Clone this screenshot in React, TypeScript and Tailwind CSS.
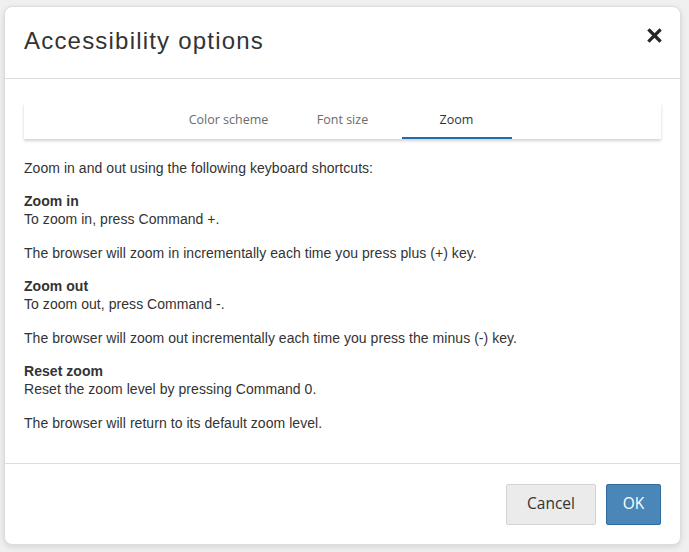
import { useState } from "react";

const tabs = ["Color scheme", "Font size", "Zoom"];

const sections = [
  {
    title: "Zoom in",
    line: "To zoom in, press Command +.",
    note: "The browser will zoom in incrementally each time you press plus (+) key.",
  },
  {
    title: "Zoom out",
    line: "To zoom out, press Command -.",
    note: "The browser will zoom out incrementally each time you press the minus (-) key.",
  },
  {
    title: "Reset zoom",
    line: "Reset the zoom level by pressing Command 0.",
    note: "The browser will return to its default zoom level.",
  },
];

const App = () => {
  const [active, setActive] = useState("Zoom");

  return (
    <div className="w-[689px] h-[552px] bg-[#f0f0f0] pt-[6px] pl-[4px] overflow-hidden">
      <div className="w-[677px] h-[539px] bg-white rounded-lg border border-[#dcdcdc] shadow-[0_2px_6px_rgba(0,0,0,0.12)] flex flex-col">
        {/* Header */}
        <div className="h-[72px] shrink-0 border-b border-[#dddddd] px-[19px] flex items-center justify-between">
          <h1 className="text-[24px] tracking-[1.2px] text-[#333] font-['Liberation_Sans',Arial,sans-serif] mt-[-3px]">
            Accessibility options
          </h1>
          <button className="w-[15px] h-[15px] flex items-center justify-center mr-[-1px] mt-[-15px]">
            <svg viewBox="0 0 15 15" className="w-[15px] h-[15px]">
              <path d="M2.5 2.5 L12.5 12.5 M12.5 2.5 L2.5 12.5" stroke="#262626" strokeWidth="3.2" strokeLinecap="square" />
            </svg>
          </button>
        </div>

        {/* Body */}
        <div className="flex-1 px-[19px] pt-[24px] font-['Liberation_Sans',Arial,sans-serif] text-[14px] leading-[18px] tracking-[0.05px] text-[#333]">
          <div className="h-[36px] flex justify-center shadow-[0_2px_3px_rgba(0,0,0,0.18)]">
            {tabs.map((t) => (
              <button
                key={t}
                onClick={() => setActive(t)}
                className={`w-[110px] mx-[2px] h-full flex items-center justify-center border-b-2 font-['Open_Sans',sans-serif] text-[12.5px] tracking-normal ${
                  active === t ? "border-[#1f6db0] text-[#333]" : "border-transparent text-[#6b6b6b]"
                }`}
              >
                {t}
              </button>
            ))}
          </div>

          <p className="mt-[20px]">Zoom in and out using the following keyboard shortcuts:</p>

          {sections.map((s) => (
            <div key={s.title} className="mt-[15px]">
              <div className="font-bold">{s.title}</div>
              <div>{s.line}</div>
              <p className="mt-[16px]">{s.note}</p>
            </div>
          ))}
        </div>

        {/* Footer */}
        <div className="h-[81px] shrink-0 border-t border-[#dddddd] px-[19px] flex items-center justify-end gap-[10px] font-['Open_Sans',sans-serif] text-[15.5px]">
          <button className="w-[90px] h-[41px] rounded-[2px] bg-[#ebebeb] border border-[#d3d3d3] text-[#333]">
            Cancel
          </button>
          <button className="w-[55px] h-[41px] rounded-[2px] bg-[#4a86b8] border border-[#2f6b9f] text-white">
            OK
          </button>
        </div>
      </div>
    </div>
  );
};

export default App;
